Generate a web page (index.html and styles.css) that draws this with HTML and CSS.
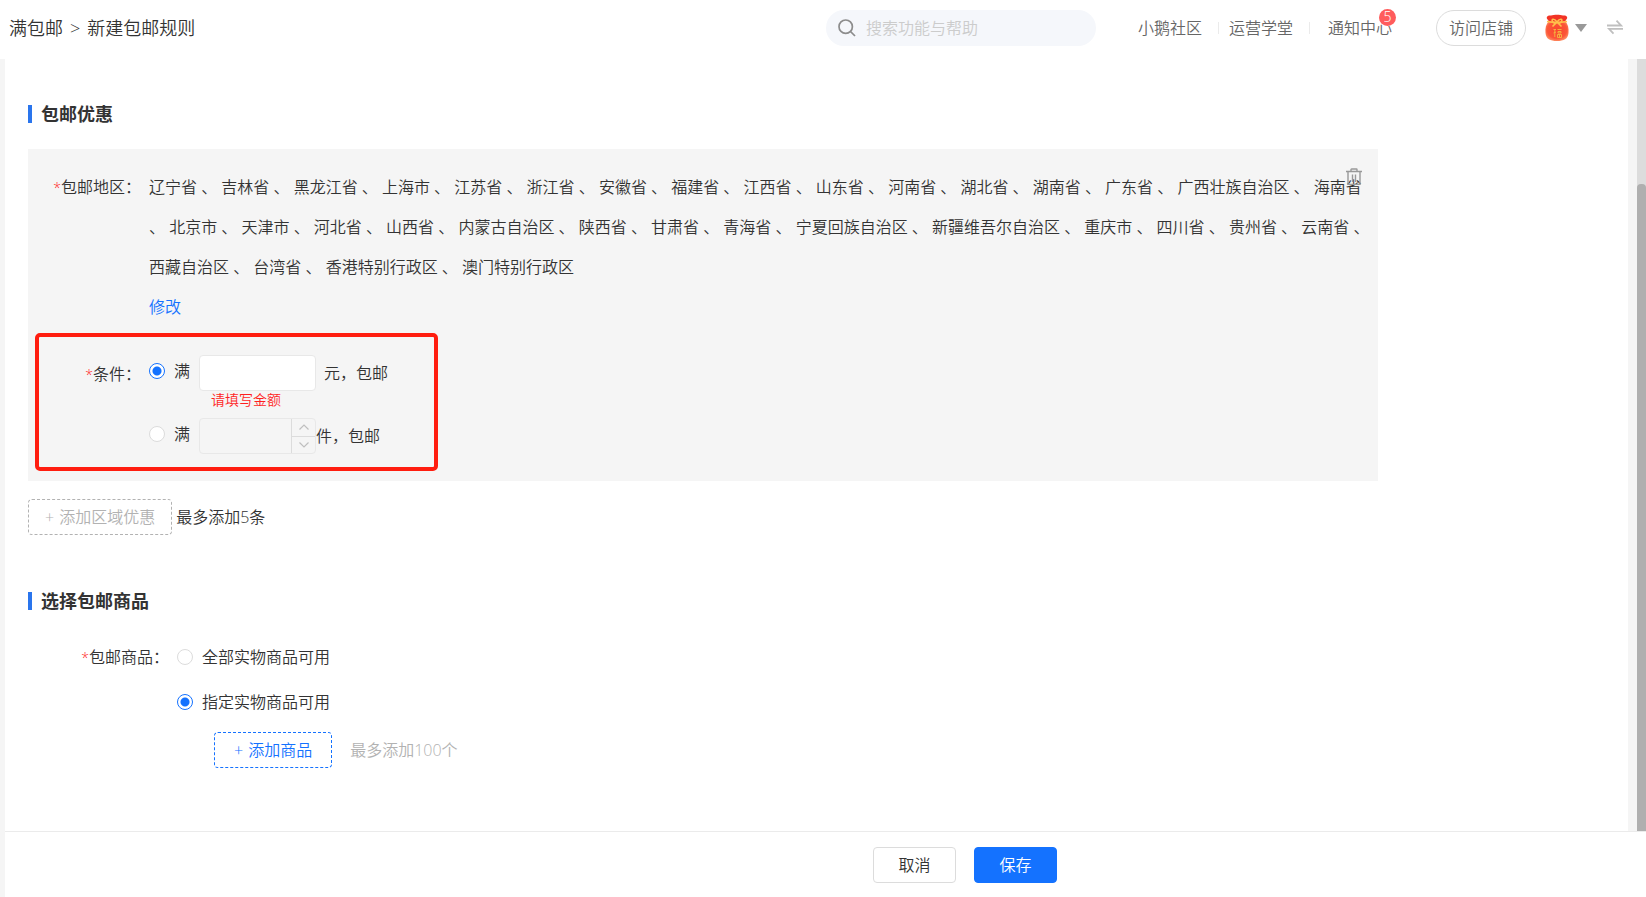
FILE: index.html
```
<!DOCTYPE html>
<html lang="zh-CN">
	<head>
		<meta charset="UTF-8">
		<title>新建包邮规则</title>
		<link rel="stylesheet" href="styles.css">
	</head>
	<body>
		<!-- 顶部 -->
		<header class="header">
			<nav class="crumb"><a href="#">满包邮</a><span>&gt;</span><span>新建包邮规则</span></nav>
			<label class="search">
				<svg width="18" height="18" viewBox="0 0 18 18" fill="none" stroke="#8c8c8c" stroke-width="1.7"><circle cx="7.7" cy="7.7" r="6.7"/><path d="M12.5 12.5L17 17"/></svg>
				<input type="text" placeholder="搜索功能与帮助" aria-label="搜索功能与帮助"/>
			</label>
			<nav class="links">
				<a href="#">小鹅社区</a>
				<a href="#">运营学堂</a>
				<a href="#" class="notice">通知中心<i class="badge">5</i></a>
			</nav>
			<button type="button" class="visit">访问店铺</button>
			<button type="button" class="user" aria-label="账号">
				<svg width="24" height="28" viewBox="0 0 24 28">
					<defs>
						<radialGradient id="bag" cx="50%" cy="45%" r="60%">
							<stop offset="0" stop-color="#f9472d"/>
							<stop offset=".7" stop-color="#fb5638"/>
							<stop offset="1" stop-color="#ff9a6c"/>
						</radialGradient>
					</defs>
					<path d="M3 6C0 3 3 1 6 1.5C9 .5 15 .5 18 1.5C21 1 24 3 21 6L19 9H5Z" fill="#f23425"/>
					<path d="M4 7C1 10 0 14 .5 19C1 25 5 27 12 27S23 25 23.500 19C24 14 23 10 20 7Z" fill="url(#bag)"/>
					<path d="M2 7.500Q12 9.500 22 7.500" fill="none" stroke="#ffc04a" stroke-width="1.6"/>
					<path d="M12 8C9 4 6 5 7.500 7.500S11 9 12 8C15 4 18 5 16.500 7.500S13 9 12 8L7.500 12.500M12 8L16.500 12.500" fill="none" stroke="#ffc04a" stroke-width="1.6"/>
					<path d="M8.500 15.500H11M9.800 15V23M8.500 19L11 18M12.500 15.500H16.500M13 17.500H16V19H13ZM12.500 20.500H16.500V23.500H12.500ZM14.500 20.500V23.500" fill="none" stroke="#f5b03e" stroke-width="1"/>
				</svg>
				<svg width="12" height="8" viewBox="0 0 12 8"><path d="M0 0H12L6 8Z" fill="#999"/></svg>
			</button>
			<button type="button" class="swap" aria-label="切换">
				<svg width="16" height="16" viewBox="0 0 16 16" fill="none" stroke="#bfbfbf" stroke-width="1.8"><path d="M0 5.500H14L9.500 .7M16 8.800H2L6.500 13.600"/></svg>
			</button>
		</header>

		<div class="body">
			<main class="main">
				<section class="discount">
					<h3>包邮优惠</h3>
					<div class="panel">
						<button type="button" class="del" aria-label="删除">
							<svg width="16" height="18" viewBox="0 0 16 18" fill="none" stroke="#999" stroke-width="1.4"><path d="M0 3.500H16M5 3V1.600Q5 1 5.600 1H10.400Q11 1 11 1.600V3M2 4V16.400H14V4M6.500 6.500V14M9.500 6.500V14"/></svg>
						</button>
						<div class="row area">
							<span class="name"><em>*</em>包邮地区：</span>
							<div class="citys">
								<p>辽宁省 、 吉林省 、 黑龙江省 、 上海市 、 江苏省 、 浙江省 、 安徽省 、 福建省 、 江西省 、 山东省 、 河南省 、 湖北省 、 湖南省 、 广东省 、 广西壮族自治区 、 海南省 <wbr>、 北京市 、 天津市 、 河北省 、 山西省 、 内蒙古自治区 、 陕西省 、 甘肃省 、 青海省 、 宁夏回族自治区 、 新疆维吾尔自治区 、 重庆市 、 四川省 、 贵州省 、 云南省 、 西藏自治区 、 台湾省 、 香港特别行政区 、 澳门特别行政区</p>
								<a href="#">修改</a>
							</div>
						</div>
						<!-- 包邮条件 -->
						<div class="condition">
							<span class="name"><em>*</em>条件：</span>
							<div class="options">
								<div class="option">
									<label class="pick"><input type="radio" name="cond" checked/>满</label>
									<input type="text" class="money" aria-label="金额"/>
									<span class="unit">元，包邮</span>
								</div>
								<p class="error">请填写金额</p>
								<div class="option">
									<label class="pick"><input type="radio" name="cond"/>满</label>
									<div class="number">
										<input type="text" aria-label="件数" disabled/>
										<div class="step">
											<button type="button" aria-label="增加" disabled><svg width="10" height="6" viewBox="0 0 10 6" fill="none" stroke="#bfbfbf" stroke-width="1.2"><path d="M.5 5.500L5 1L9.500 5.500"/></svg></button>
											<button type="button" aria-label="减少" disabled><svg width="10" height="6" viewBox="0 0 10 6" fill="none" stroke="#bfbfbf" stroke-width="1.2"><path d="M.5 .5L5 5L9.500 .5"/></svg></button>
										</div>
									</div>
									<span class="unit">件，包邮</span>
								</div>
							</div>
						</div>
					</div>
					<div class="addarea">
						<button type="button" class="dash" disabled><span>+</span>添加区域优惠</button>
						<span>最多添加5条</span>
					</div>
				</section>

				<section class="goods">
					<h3>选择包邮商品</h3>
					<div class="row">
						<span class="name"><em>*</em>包邮商品：</span>
						<div class="list">
							<label class="pick"><input type="radio" name="goods"/>全部实物商品可用</label>
							<label class="pick"><input type="radio" name="goods" checked/>指定实物商品可用</label>
							<div class="addgoods">
								<button type="button" class="dash blue"><span>+</span>添加商品</button>
								<span>最多添加100个</span>
							</div>
						</div>
					</div>
				</section>
			</main>
			<div class="scroll"><div class="thumb"></div></div>
		</div>

		<footer class="footer">
			<button type="button">取消</button>
			<button type="button" class="save">保存</button>
		</footer>
	</body>
</html>
```
FILE: styles.css
```
*{
	box-sizing: border-box;
	margin: 0;
	padding: 0;
}
body{
	display: flex;
	flex-direction: column;
	min-height: 100vh;
	font: 350 16px/20px "Open Sans","Noto Sans CJK SC",sans-serif;
	color: #333;
	background: #fff;
}
input,button{
	font: inherit;
	color: inherit;
}
button{
	cursor: pointer;
	background: none;
	border: 0;
}
a{
	color: inherit;
	text-decoration: none;
}
em,i{
	font-style: normal;
}
em{
	font-size: 14px;
	color: #ff1f1f;
}
svg{
	display: block;
}

/*顶部*/
.header{
	display: flex;
	align-items: center;
	height: 59px;
	padding: 0 23px 3px 9px;
	color: #666;
}
.crumb{
	display: flex;
	gap: 7px;
	margin-right: auto;
	font-size: 18px;
	color: #333;
}
.search{
	display: flex;
	align-items: center;
	gap: 10px;
	width: 270px;
	height: 36px;
	padding: 0 12px;
	border-radius: 18px;
	background: #f5f7fb;
}
.search input{
	flex: 1;
	min-width: 0;
	border: 0;
	outline: 0;
	background: none;
}
.search input::placeholder{
	color: #ccc;
}
.links{
	display: flex;
	margin: 0 44px 0 26px;
}
.links a{
	position: relative;
	padding: 0 0 0 10px;
	line-height: 12px;
}
.links a:first-child{
	padding: 0 16px;
}
.links a+a{
	padding-right: 16px;
	border-left: 1px solid #ebebeb;
}
.links .notice{
	padding: 0 0 0 18px;
}
.badge{
	position: absolute;
	top: -13px;
	right: -4px;
	width: 17px;
	height: 17px;
	border-radius: 50%;
	background: #ff5c5c;
	color: #fff;
	font-size: 14px;
	line-height: 16px;
	text-align: center;
}
.visit{
	width: 90px;
	height: 36px;
	border: 1px solid #dcdcdc;
	border-radius: 18px;
}
.user{
	display: flex;
	align-items: center;
	gap: 6px;
	margin: 0 20px 0 19px;
}

/*内容*/
.body{
	flex: 1;
	display: flex;
	border-left: 5px solid #f5f5f5;
}
.main{
	flex: 1;
	padding: 45px 23px 0;
	border-right: 9px solid #f5f5f5;
}
.scroll{
	display: flex;
	width: 9px;
	padding-top: 125px;
	background: #dcdcdc;
}
.thumb{
	flex: 1;
	border-radius: 4px 4px 0 0;
	background: #afafaf;
}
h3{
	display: flex;
	align-items: center;
	gap: 9px;
	height: 20px;
	font-size: 18px;
}
h3::before{
	content: "";
	width: 4px;
	height: 18px;
	background: #2a75ed;
}
.panel{
	position: relative;
	max-width: 1350px;
	margin-top: 25px;
	padding: 18px 0 10px;
	background: #f5f5f5;
}
.del{
	position: absolute;
	top: 19px;
	right: 16px;
}
.row{
	display: flex;
}
.name{
	flex: none;
	text-align: right;
}
.area{
	gap: 8px;
	padding-right: 4px;
	line-height: 40px;
}
.area .name{
	width: 113px;
}
.citys a{
	display: block;
	color: #1472ff;
}

/*条件*/
.condition{
	display: flex;
	gap: 8px;
	width: 403px;
	margin: 6px 0 0 7px;
	padding: 18px 0 13px;
	border: 4px solid #ff1d0f;
	border-radius: 5px;
}
.condition .name{
	width: 102px;
	line-height: 38px;
}
.option{
	display: flex;
}
.pick{
	display: flex;
	align-items: center;
	gap: 9px;
}
.option .pick{
	height: 32px;
	margin-right: 9px;
}
input[type="radio"]{
	appearance: none;
	width: 16px;
	height: 16px;
	border: 1px solid #dcdcdc;
	border-radius: 50%;
	background: #fff;
}
input[type="radio"]:checked{
	border-color: #1472ff;
	background: radial-gradient(circle,#1472ff 4px,#fff 5px);
}
.money,.number{
	width: 117px;
	height: 36px;
	border: 1px solid #e8e8e8;
	border-radius: 4px;
}
.money{
	margin-right: 8px;
	padding: 0 10px;
	background: #fff;
}
.unit{
	line-height: 36px;
}
.error{
	padding-left: 62px;
	margin-bottom: 9px;
	font-size: 14px;
	line-height: 18px;
	color: #ff1f1f;
}
.number{
	display: flex;
}
.number input{
	flex: 1;
	min-width: 0;
	border: 0;
	background: none;
}
.step{
	display: flex;
	flex-direction: column;
	width: 24px;
	border-left: 1px solid #dcdcdc;
}
.step button{
	display: flex;
	flex: 1;
	align-items: center;
	justify-content: center;
}
.step button+button{
	border-top: 1px solid #dcdcdc;
}

/*虚线按钮*/
.dash{
	display: flex;
	align-items: center;
	justify-content: center;
	gap: 5px;
	height: 36px;
	padding: 0 16px;
	border: 1px dashed #b2b2b2;
	border-radius: 4px;
	color: #b2b2b2;
}
.blue{
	padding: 0 19px;
	border-color: #1472ff;
	color: #1472ff;
}
.addarea{
	display: flex;
	align-items: center;
	gap: 4px;
	margin-top: 18px;
}
.goods{
	margin-top: 56px;
}
.goods .row{
	gap: 8px;
	margin-top: 36px;
}
.goods .name{
	width: 141px;
}
.list .pick{
	height: 20px;
	margin-bottom: 25px;
}
.addgoods{
	display: flex;
	align-items: center;
	gap: 18px;
	margin: -5px 0 20px 37px;
	color: #b2b2b2;
}

/*底部*/
.footer{
	display: flex;
	justify-content: center;
	gap: 18px;
	height: 66px;
	padding: 16px 0 0 279px;
	border-left: 5px solid #f5f5f5;
	background: linear-gradient(#ebebeb,#ebebeb) top/100% 1px no-repeat;
}
.footer button{
	width: 83px;
	height: 36px;
	border: 1px solid #dcdcdc;
	border-radius: 4px;
}
.footer .save{
	border-color: #1472ff;
	background: #1472ff;
	color: #fff;
}
```
